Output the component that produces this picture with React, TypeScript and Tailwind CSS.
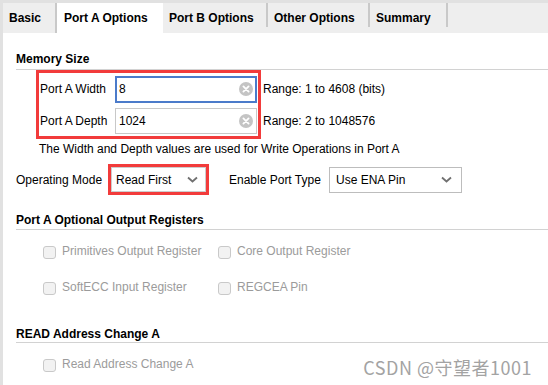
const sans = "font-['Liberation_Sans',Arial,sans-serif]";

function ClearIcon() {
  return (
    <svg width="14" height="14" viewBox="0 0 14 14">
      <circle cx="7" cy="7" r="7" fill="#c4c4c4" />
      <path d="M4.4 4.4l5.2 5.2M9.6 4.4l-5.2 5.2" stroke="#fff" strokeWidth="1.8" strokeLinecap="round" />
    </svg>
  );
}

function Chevron() {
  return (
    <svg width="11" height="7" viewBox="0 0 11 7">
      <path d="M1 1.5l4.5 4 4.5-4" stroke="#707070" strokeWidth="1.8" fill="none" />
    </svg>
  );
}

function Tab({ label, w, active }: { label: string; w: string; active?: boolean }) {
  return (
    <div className={`${w} flex h-full items-center ${active ? "bg-white pl-[7px]" : "pl-[6px]"} pb-[1px] text-[12px] font-bold text-black`}>
      {label}
    </div>
  );
}

function Sep({ full }: { full?: boolean }) {
  return <div className={`w-[2px] bg-[#c9c9c9] ${full ? "h-full" : "h-[24px] self-start"}`} />;
}

function Check({ label }: { label: string }) {
  return (
    <div className="flex h-[16px] items-center">
      <div className="mt-[2px] h-[13px] w-[13px] rounded-[3px] border border-[#c9c9c9] bg-[#f2f2f2]" />
      <span className="ml-[6px] text-[12px] text-[#9b9b9b]">{label}</span>
    </div>
  );
}

function Heading({ children, mt }: { children: string; mt: string }) {
  return <div className={`${mt} h-[16px] text-[12px] font-bold leading-[16px] text-black`}>{children}</div>;
}

export default function App() {
  return (
    <div className={`${sans} relative h-[385px] w-[548px] overflow-hidden bg-[#e1e1e1] pl-[3px] pt-[3px]`}>
      <div className="flex h-[30px] bg-[#eeeeee]">
        <Tab label="Basic" w="w-[52px]" />
        <Sep full />
        <Tab label="Port A Options" w="w-[106px]" active />
        <Tab label="Port B Options" w="w-[103px]" />
        <Sep />
        <Tab label="Other Options" w="w-[100px]" />
        <Sep />
        <Tab label="Summary" w="w-[76px]" />
        <Sep />
      </div>

      <div className="h-[352px] bg-white pl-[13px] pt-[17px] text-[12px] text-black">
        <Heading mt="mt-[1px]">Memory Size</Heading>
        <div className="mt-[2px] h-px bg-[#d2d2d2]" />

        <div className="flex">
          <div className="ml-[20px] w-[225px] border-[3px] border-[#f23b3b] pb-[2px] pr-[1px] pt-[3px]">
            <div className="flex flex-col gap-[6px]">
              <div className="flex h-[26px] items-center">
                <span className="w-[76px] pl-[1px]">Port A Width</span>
                <div className="flex h-[27px] w-[142px] items-center justify-between border-2 border-[#4b7bca] pl-[2px] pr-[2px]">
                  <span>8</span>
                  <ClearIcon />
                </div>
              </div>
              <div className="flex h-[26px] items-center">
                <span className="w-[76px] pl-[1px]">Port A Depth</span>
                <div className="flex h-[26px] w-[142px] items-center justify-between border border-[#c8c8c8] pl-[3px] pr-[3px]">
                  <span>1024</span>
                  <ClearIcon />
                </div>
              </div>
            </div>
          </div>
          <div className="ml-[2px] flex flex-col gap-[6px] pt-[6px]">
            <div className="flex h-[26px] items-center">Range: 1 to 4608 (bits)</div>
            <div className="flex h-[26px] items-center">Range: 2 to 1048576</div>
          </div>
        </div>

        <div className="mt-[2px] pl-[23px] leading-[16px]">
          The Width and Depth values are used for Write Operations in Port A
        </div>

        <div className="mt-[7px] flex h-[31px] items-center">
          <span className="w-[92px]">Operating Mode</span>
          <div className="h-[31px] w-[101px] border-[3px] border-[#f23b3b]">
            <div className="flex h-full items-center justify-between border border-[#cdcdcd] pl-[4px] pr-[7px]">
              <span>Read First</span>
              <Chevron />
            </div>
          </div>
          <span className="ml-[20px] w-[100px]">Enable Port Type</span>
          <div className="flex h-[26px] w-[133px] items-center justify-between border border-[#bdbdbd] pl-[6px] pr-[9px]">
            <span>Use ENA Pin</span>
            <Chevron />
          </div>
        </div>

        <Heading mt="mt-[17px]">Port A Optional Output Registers</Heading>
        <div className="mt-[1px] h-px bg-[#d2d2d2]" />

        <div className="mt-[13px] grid grid-cols-[175px_1fr] gap-y-[20px] pl-[27px]">
          <Check label="Primitives Output Register" />
          <Check label="Core Output Register" />
          <Check label="SoftECC Input Register" />
          <Check label="REGCEA Pin" />
        </div>

        <Heading mt="mt-[31px]">READ Address Change A</Heading>
        <div className="h-px bg-[#d2d2d2]" />

        <div className="mt-[13px] pl-[27px]">
          <Check label="Read Address Change A" />
        </div>
      </div>

      <div className="absolute bottom-[6px] right-[16px] whitespace-nowrap font-['Noto_Sans_CJK_SC',sans-serif] text-[18px] leading-[24px] tracking-[0.5px] text-[#a3a3a3]">
        CSDN @守望者1001
      </div>
    </div>
  );
}
